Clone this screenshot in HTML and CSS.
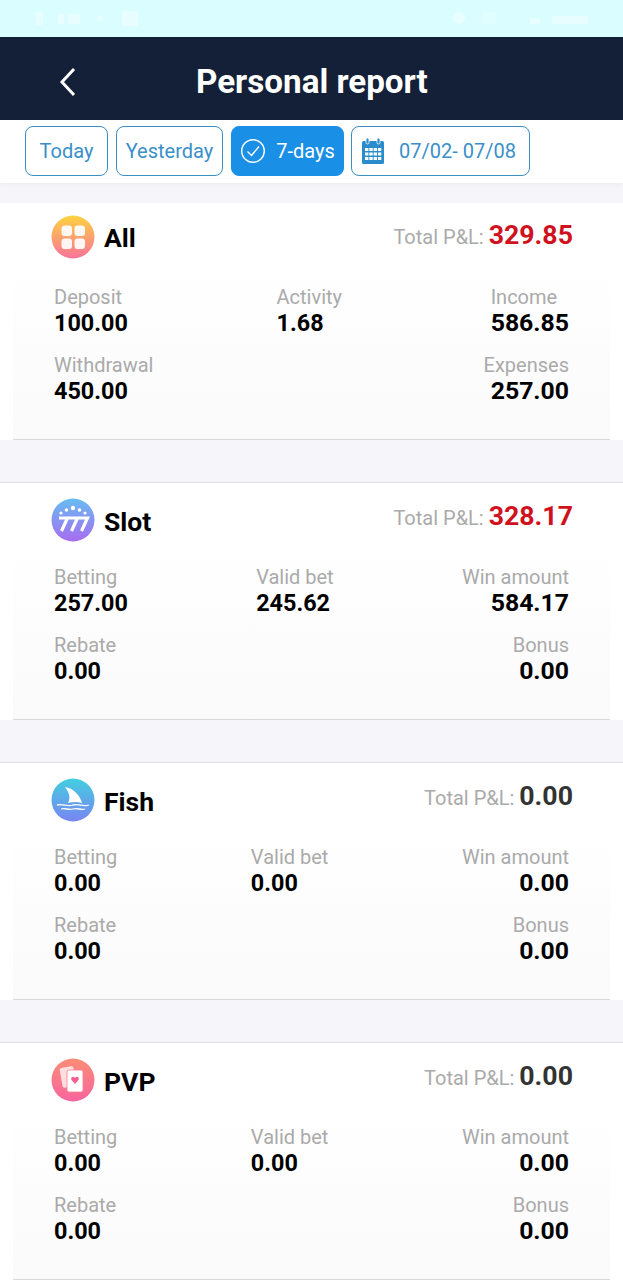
FILE: index.html
```html
<!DOCTYPE html>
<html lang="en">
<head>
  <meta charset="UTF-8" />
  <meta name="viewport" content="width=device-width, initial-scale=1.0" />
  <title>Personal report</title>
  <link rel="stylesheet" href="styles.css">
</head>
<body>
  <div class="status-bar">
    <svg width="623" height="37" viewBox="0 0 623 37" fill="#fff" opacity="0.4">
      <rect x="36" y="12" width="7" height="13" rx="1"/>
      <rect x="58" y="14" width="6" height="10"/>
      <rect x="68" y="14" width="12" height="10"/>
      <circle cx="100" cy="19" r="3"/>
      <rect x="122" y="11" width="16" height="15" rx="1"/>
      <circle cx="459" cy="18" r="6"/>
      <rect x="482" y="12" width="14" height="12" opacity="0.4"/>
      <rect x="530" y="18" width="10" height="6"/>
      <rect x="552" y="16" width="36" height="8"/>
    </svg>
  </div>

  <div class="header">
    <svg class="back-icon" width="20" height="30" viewBox="0 0 20 30" fill="none" stroke="#fff" stroke-width="3">
      <path d="M16 2 L4 15 L16 28"/>
    </svg>
    <h1>Personal report</h1>
  </div>

  <div class="tabs">
    <div class="tab tab-today">Today</div>
    <div class="tab tab-yesterday">Yesterday</div>
    <div class="tab tab-week active">
      <svg width="26" height="26" viewBox="0 0 26 26" fill="none" stroke="#fff" stroke-width="1.4">
        <circle cx="13" cy="13" r="11.3"/>
        <path d="M7.5 13.5 L11.5 17.5 L19 8.5"/>
      </svg>
      <span>7-days</span>
    </div>
    <div class="tab tab-date">
      <svg width="24" height="28" viewBox="0 0 24 28">
        <rect x="1" y="4" width="22" height="23" rx="1.5" fill="#2a8ccb"/>
        <rect x="5" y="1" width="3" height="6" rx="1.5" fill="#2a8ccb" stroke="#fff" stroke-width="0.8"/>
        <rect x="16" y="1" width="3" height="6" rx="1.5" fill="#2a8ccb" stroke="#fff" stroke-width="0.8"/>
        <g fill="#fff">
          <rect x="4" y="11" width="3.4" height="3"/><rect x="8.3" y="11" width="3.4" height="3"/><rect x="12.6" y="11" width="3.4" height="3"/><rect x="16.9" y="11" width="3.4" height="3"/>
          <rect x="4" y="15.5" width="3.4" height="3"/><rect x="8.3" y="15.5" width="3.4" height="3"/><rect x="12.6" y="15.5" width="3.4" height="3"/><rect x="16.9" y="15.5" width="3.4" height="3"/>
          <rect x="4" y="20" width="3.4" height="3"/><rect x="8.3" y="20" width="3.4" height="3"/><rect x="12.6" y="20" width="3.4" height="3"/><rect x="16.9" y="20" width="3.4" height="3"/>
        </g>
      </svg>
      <span>07/02- 07/08</span>
    </div>
  </div>

  <div class="card first">
    <div class="card-head">
      <svg class="game-icon" width="44" height="44" viewBox="0 0 44 44">
        <defs><linearGradient id="g-all" x1="0" y1="0" x2="0" y2="1"><stop offset="0" stop-color="#fdd33f"/><stop offset="1" stop-color="#f9739a"/></linearGradient></defs>
        <circle cx="22" cy="22" r="21.5" fill="url(#g-all)"/>
        <g fill="#fff" opacity="0.92">
          <rect x="10.5" y="10.5" width="10.5" height="10.5" rx="3"/><rect x="23.5" y="10.5" width="10.5" height="10.5" rx="3"/>
          <rect x="10.5" y="23.5" width="10.5" height="10.5" rx="3"/><rect x="23.5" y="23.5" width="10.5" height="10.5" rx="3"/>
        </g>
      </svg>
      <div class="card-title">All</div>
      <div class="total"><span class="total-label">Total P&amp;L:</span> <span class="total-value red">329.85</span></div>
    </div>
    <div class="card-body">
      <div class="row">
        <div class="stat"><div class="label">Deposit</div><div class="value">100.00</div></div>
        <div class="stat"><div class="label">Activity</div><div class="value">1.68</div></div>
        <div class="stat right income"><div class="label">Income</div><div class="value">586.85</div></div>
      </div>
      <div class="row">
        <div class="stat"><div class="label">Withdrawal</div><div class="value">450.00</div></div>
        <div class="stat right"><div class="label">Expenses</div><div class="value">257.00</div></div>
      </div>
    </div>
  </div>

  <div class="card">
    <div class="card-head">
      <svg class="game-icon" width="44" height="44" viewBox="0 0 44 44">
        <defs><linearGradient id="g-slot" x1="0" y1="0" x2="0" y2="1"><stop offset="0" stop-color="#66bdf2"/><stop offset="1" stop-color="#a86cf0"/></linearGradient></defs>
        <circle cx="22" cy="22" r="21.5" fill="url(#g-slot)"/>
        <g fill="#fff">
          <circle cx="10" cy="15" r="1.6"/><circle cx="15.5" cy="12" r="1.8"/><circle cx="22" cy="10" r="2.2"/><circle cx="28.5" cy="12" r="1.8"/><circle cx="34" cy="15" r="1.6"/>
        </g>
        <g fill="none" stroke="#fff" stroke-width="3.2">
          <path d="M8 20 H16.5 L10.5 33"/><path d="M18 20 H26.5 L20.5 33"/><path d="M28 20 H36.5 L30.5 33"/>
        </g>
      </svg>
      <div class="card-title">Slot</div>
      <div class="total"><span class="total-label">Total P&amp;L:</span> <span class="total-value red">328.17</span></div>
    </div>
    <div class="card-body">
      <div class="row">
        <div class="stat"><div class="label">Betting</div><div class="value">257.00</div></div>
        <div class="stat"><div class="label">Valid bet</div><div class="value">245.62</div></div>
        <div class="stat right"><div class="label">Win amount</div><div class="value">584.17</div></div>
      </div>
      <div class="row">
        <div class="stat"><div class="label">Rebate</div><div class="value">0.00</div></div>
        <div class="stat right"><div class="label">Bonus</div><div class="value">0.00</div></div>
      </div>
    </div>
  </div>

  <div class="card">
    <div class="card-head">
      <svg class="game-icon" width="44" height="44" viewBox="0 0 44 44">
        <defs><linearGradient id="g-fish" x1="0" y1="0" x2="0" y2="1"><stop offset="0" stop-color="#42cfe0"/><stop offset="1" stop-color="#7a84f2"/></linearGradient></defs>
        <circle cx="22" cy="22" r="21.5" fill="url(#g-fish)"/>
        <path d="M14 9 C22 10 29 17 31 25 C27 23.5 22 23.5 17 25 C20 20 18 14 14 9 Z" fill="#fff"/>
        <g fill="none" stroke="#fff" stroke-width="1.3">
          <path d="M6 27 C12 25.5 16 29 22 27 C28 25.5 32 29 38 27"/>
          <path d="M10 31 C14 29.5 18 32.5 22 31 C26 29.5 30 32.5 34 31"/>
        </g>
      </svg>
      <div class="card-title">Fish</div>
      <div class="total"><span class="total-label">Total P&amp;L:</span> <span class="total-value">0.00</span></div>
    </div>
    <div class="card-body">
      <div class="row">
        <div class="stat"><div class="label">Betting</div><div class="value">0.00</div></div>
        <div class="stat"><div class="label">Valid bet</div><div class="value">0.00</div></div>
        <div class="stat right"><div class="label">Win amount</div><div class="value">0.00</div></div>
      </div>
      <div class="row">
        <div class="stat"><div class="label">Rebate</div><div class="value">0.00</div></div>
        <div class="stat right"><div class="label">Bonus</div><div class="value">0.00</div></div>
      </div>
    </div>
  </div>

  <div class="card">
    <div class="card-head">
      <svg class="game-icon" width="44" height="44" viewBox="0 0 44 44">
        <defs><linearGradient id="g-pvp" x1="0" y1="0" x2="0" y2="1"><stop offset="0" stop-color="#fb8d76"/><stop offset="1" stop-color="#f9649f"/></linearGradient></defs>
        <circle cx="22" cy="22" r="21.5" fill="url(#g-pvp)"/>
        <rect x="10" y="9" width="14" height="20" rx="2" fill="#fff" opacity="0.75" transform="rotate(-10 17 19)"/>
        <rect x="16" y="12" width="16" height="22" rx="2" fill="#fff" stroke="#fb7d8a" stroke-width="0.8"/>
        <path d="M24 26 L20.5 22 C19 19.5 22.5 17.5 24 20 C25.5 17.5 29 19.5 27.5 22 Z" fill="#f4608f"/>
      </svg>
      <div class="card-title">PVP</div>
      <div class="total"><span class="total-label">Total P&amp;L:</span> <span class="total-value">0.00</span></div>
    </div>
    <div class="card-body">
      <div class="row">
        <div class="stat"><div class="label">Betting</div><div class="value">0.00</div></div>
        <div class="stat"><div class="label">Valid bet</div><div class="value">0.00</div></div>
        <div class="stat right"><div class="label">Win amount</div><div class="value">0.00</div></div>
      </div>
      <div class="row">
        <div class="stat"><div class="label">Rebate</div><div class="value">0.00</div></div>
        <div class="stat right"><div class="label">Bonus</div><div class="value">0.00</div></div>
      </div>
    </div>
  </div>
</body>
</html>
```
FILE: styles.css
```css
body {
  font-family: Roboto, "Liberation Sans", sans-serif;
  margin: 0;
  background-color: #f5f5fa;
  height: 1280px;
  overflow: hidden;
}
.status-bar {
  height: 37px;
  background: #dafdff;
}
.status-bar svg {
  display: block;
}
.header {
  height: 83px;
  background: #141f38;
  display: flex;
  align-items: center;
  padding: 6px 0 0 58px;
  box-sizing: border-box;
}
.back-icon {
  flex: none;
}
.header h1 {
  margin: 0 0 0 118px;
  color: white;
  font-size: 33.2px;
  font-weight: 700;
  white-space: nowrap;
}
.tabs {
  height: 63px;
  background: white;
  box-shadow: 0 2px 4px rgba(0, 0, 0, 0.04);
  display: flex;
  gap: 8px;
  padding: 6px 0 0 25px;
  box-sizing: border-box;
  margin-bottom: 20px;
}
.tab {
  height: 50px;
  box-sizing: border-box;
  border: 1.5px solid #3a8fc4;
  border-radius: 8px;
  color: #3a8fc9;
  font-size: 20px;
  display: flex;
  align-items: center;
  justify-content: center;
}
.tab-today {
  width: 83px;
}
.tab-yesterday {
  width: 107px;
}
.tab-week {
  width: 113px;
  gap: 10px;
}
.tab-date {
  width: 179px;
  margin-left: -1px;
  gap: 14px;
  justify-content: flex-start;
  padding-left: 9px;
}
.tab.active {
  background: #1a8fe6;
  border-color: #1a8fe6;
  color: white;
}
.card {
  background: white;
  margin-bottom: 42px;
  border-top: 1px solid #dedede;
}
.card.first {
  border-top: none;
}
.card-head {
  height: 67px;
  display: flex;
  align-items: center;
  padding: 6px 50px 0 51px;
  box-sizing: border-box;
}
.first .card-head {
  padding-top: 0;
}
.game-icon {
  flex: none;
}
.card-title {
  margin: 3px 0 0 9px;
  font-size: 26.5px;
  font-weight: 700;
  color: black;
}
.first .card-title {
  margin-top: 2px;
}
.total {
  margin-left: auto;
  margin-top: -8px;
  display: flex;
  align-items: baseline;
  gap: 5px;
}
.first .total {
  margin-top: -4px;
}
.total-label {
  font-size: 20px;
  color: #aaaaaa;
}
.total-value {
  font-size: 26.7px;
  font-weight: 700;
  color: #333333;
}
.total-value.red {
  color: #d0121e;
}
.card-body {
  height: 170px;
  margin: 0 13px;
  padding: 15px 41px 0 41px;
  box-sizing: border-box;
  background: linear-gradient(#ffffff, #fafafb);
  border-bottom: 1px solid #d9d9d9;
}
.row {
  display: flex;
  justify-content: space-between;
  margin-bottom: 15px;
}
.stat {
  display: flex;
  flex-direction: column;
}
.stat.right {
  align-items: flex-end;
}
.stat.income {
  align-items: flex-start;
}
.label {
  font-size: 20px;
  line-height: 24px;
  color: #aaaaaa;
}
.value {
  font-size: 23.4px;
  line-height: 29px;
  font-weight: 700;
  color: black;
}
.stat.right .value {
  font-size: 24.8px;
  line-height: 27px;
}
```
